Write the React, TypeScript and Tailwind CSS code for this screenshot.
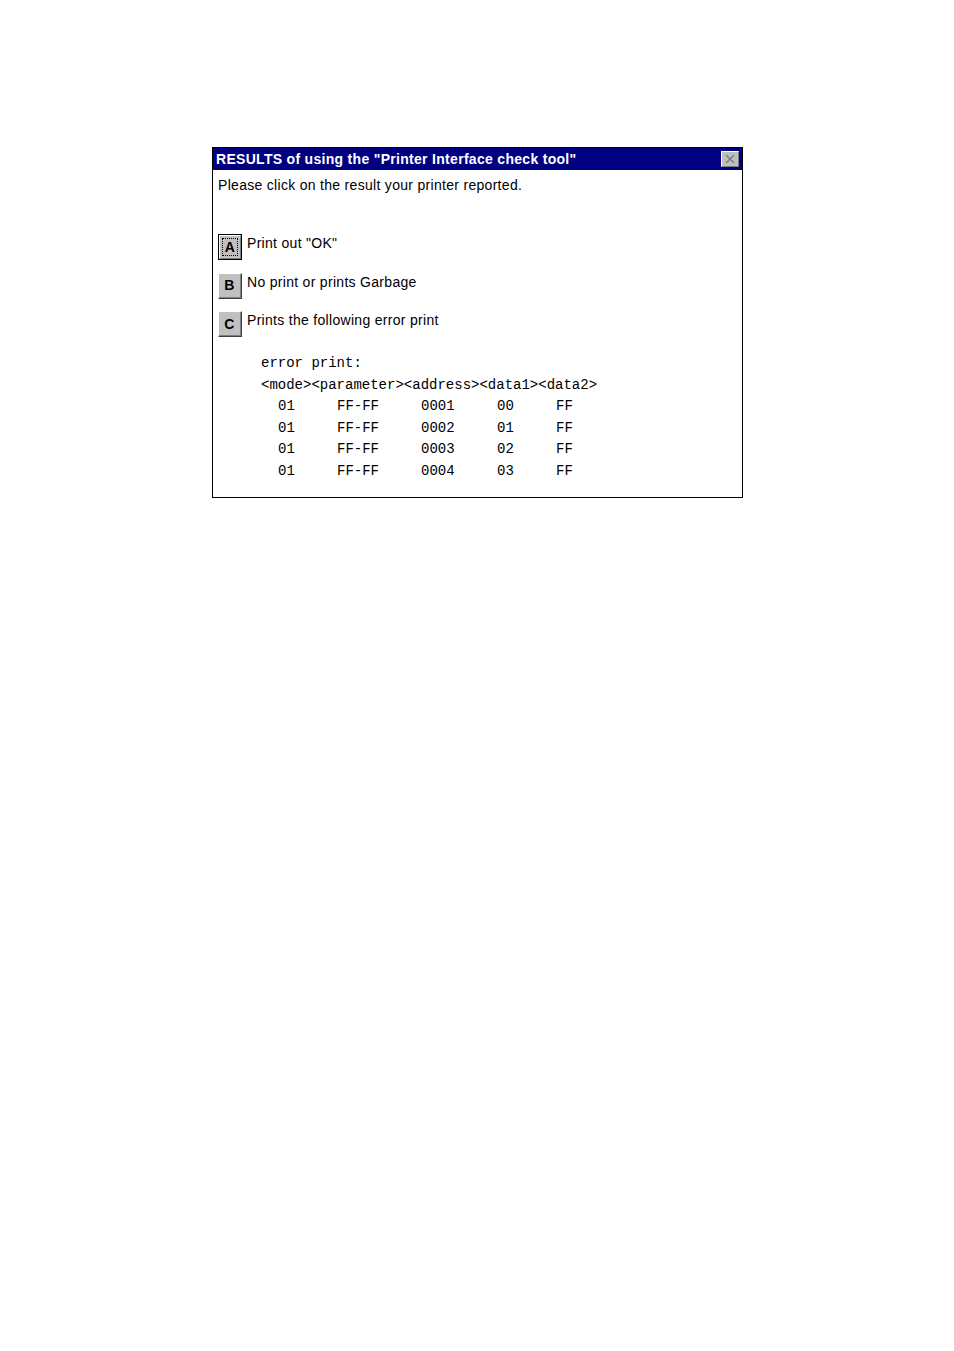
const rows = [
  ["01", "FF-FF", "0001", "00", "FF"],
  ["01", "FF-FF", "0002", "01", "FF"],
  ["01", "FF-FF", "0003", "02", "FF"],
  ["01", "FF-FF", "0004", "03", "FF"],
];

const options = [
  { key: "A", label: 'Print out "OK"', focused: true },
  { key: "B", label: "No print or prints Garbage", focused: false },
  { key: "C", label: "Prints the following error print", focused: false },
];

function CloseButton() {
  return (
    <div className="w-[18px] h-[16px] bg-[#c0c0c0] border-t border-l border-white border-r border-b border-r-[#808080] border-b-[#808080] flex items-center justify-center">
      <svg width="10" height="9" viewBox="0 0 10 9">
        <path d="M1 0 L9 8 M9 0 L1 8" stroke="#808080" strokeWidth="1.6" />
      </svg>
    </div>
  );
}

function OptionButton({ letter, focused }: { letter: string; focused: boolean }) {
  return (
    <div
      className={
        focused
          ? "w-[24px] h-[26px] border border-black bg-[#c0c0c0] shrink-0"
          : "w-[24px] h-[26px] bg-[#c0c0c0] shrink-0 border-t border-l border-white border-r border-b border-r-[#404040] border-b-[#404040]"
      }
    >
      <div
        className={
          focused
            ? "w-full h-full border-t border-l border-white border-r border-b border-r-[#808080] border-b-[#808080] p-[2px]"
            : "w-full h-full border-r border-b border-[#808080] p-[2px]"
        }
      >
        <div
          className={
            focused
              ? "w-full h-full border border-dotted border-black flex items-center justify-center"
              : "w-full h-full flex items-center justify-center"
          }
        >
          <span className="font-['Liberation_Sans',Arial,sans-serif] font-bold text-[14px] leading-none text-black">
            {letter}
          </span>
        </div>
      </div>
    </div>
  );
}

export default function App() {
  return (
    <div className="min-h-[1351px] bg-white pt-[147px] pl-[212px]">
      <div className="w-[531px] border border-black bg-white">
        <div className="h-[22px] bg-[#000080] flex items-center justify-between pl-[3px] pr-[3px]">
          <span className="font-['Liberation_Sans',Arial,sans-serif] font-bold text-[14px] tracking-[0.3px] text-white leading-none">
            RESULTS of using the "Printer Interface check tool"
          </span>
          <CloseButton />
        </div>

        <div className="pl-[5px] pb-[14px] font-['Liberation_Sans',Arial,sans-serif] text-[14px] tracking-[0.3px] text-black">
          <p className="mt-[7px] leading-[16px]">Please click on the result your printer reported.</p>

          <div className="mt-[41px] flex flex-col gap-[12.5px]">
            {options.map((o) => (
              <div key={o.key} className="flex items-start gap-[5px]">
                <OptionButton letter={o.key} focused={o.focused} />
                <span className="leading-[18px]">{o.label}</span>
              </div>
            ))}
          </div>

          <div className="mt-[16px] pl-[43px] font-['Liberation_Mono','Courier_New',monospace] text-[14px] tracking-normal leading-[21.6px] whitespace-pre">
            <div>error print:</div>
            <div>{"<mode><parameter><address><data1><data2>"}</div>
            {rows.map((r, i) => (
              <div key={i} className="grid grid-cols-[59px_84px_76px_59px_auto] pl-[17px]">
                {r.map((c, j) => (
                  <span key={j}>{c}</span>
                ))}
              </div>
            ))}
          </div>
        </div>
      </div>
    </div>
  );
}
